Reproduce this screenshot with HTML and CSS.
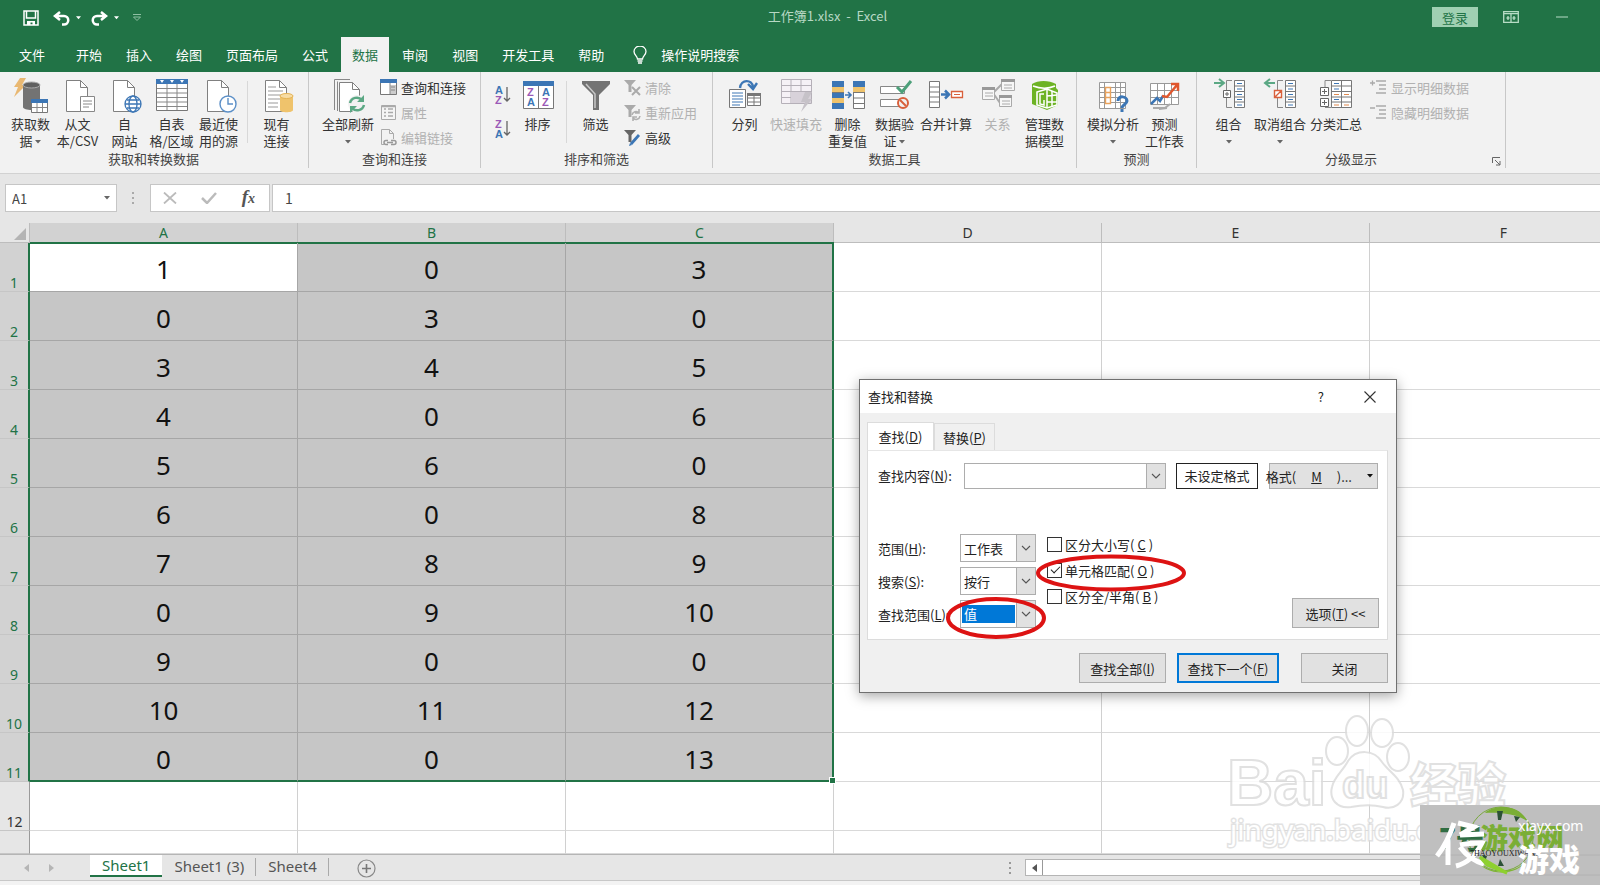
FILE: index.html
```html
<!DOCTYPE html>
<html lang="zh-CN">
<head>
<meta charset="utf-8">
<title>工作簿1.xlsx - Excel</title>
<link rel="stylesheet" href="styles.css">
</head>
<body>
<svg class="defs" aria-hidden="true">
  <defs>
    <symbol id="caret" viewBox="0 0 6 4"><path d="M0 0h6L3 3.5z" fill="currentColor"/></symbol>
    <symbol id="chev" viewBox="0 0 10 6"><path d="M1 1l4 4 4-4" fill="none" stroke="#555" stroke-width="1.1"/></symbol>
    <symbol id="page" viewBox="0 0 22 32"><path d="M.5.5h14l7 7v24H.5z" fill="#fff" stroke="#808080"/><path d="M14.500.5v7h7" fill="none" stroke="#808080"/></symbol>
    <symbol id="funnel" viewBox="0 0 28 30"><path d="M0 0h28v3L17 14v15h-6V14L0 3z" fill="#737373"/><path d="M4 3l9 10v14" fill="none" stroke="#c8c8c8" stroke-width="1.500"/></symbol>
  </defs>
</svg>
<div class="app">
  <header class="titlebar">
    <div class="quick">
      <button aria-label="保存"><svg width="16" height="16" viewBox="0 0 16 16"><path d="M1 1h14v14H1zM3.500 1v7h9V1" fill="none" stroke="#fff" stroke-width="1.500"/><path d="M4 11h8v4H9.500v-2.500h-2V15H4z" fill="#fff"/></svg></button>
      <button class="undo" aria-label="撤消"><svg width="17" height="15" viewBox="0 0 17 15"><path d="M7 1L2 5l5 4M2.500 5H11a4 4 0 0 1 0 8.500H9" fill="none" stroke="#fff" stroke-width="2.500"/></svg><svg class="tiny"><use href="#caret"/></svg></button>
      <button class="redo" aria-label="恢复"><svg width="17" height="15" viewBox="0 0 17 15"><path d="M10 1l5 4-5 4M14.500 5H6a4 4 0 0 0 0 8.500h2" fill="none" stroke="#fff" stroke-width="2.500"/></svg><svg class="tiny"><use href="#caret"/></svg></button>
      <button class="custom" aria-label="自定义快速访问工具栏"><svg width="10" height="8" viewBox="0 0 10 8"><path d="M1 .5h8M1.500 3h7L5 6.500z" fill="none" stroke="#8fc0a3"/></svg></button>
    </div>
    <h1>工作簿1.xlsx&nbsp; -&nbsp; Excel</h1>
    <div class="winctl">
      <button class="login">登录</button>
      <button aria-label="功能区显示选项"><svg width="16" height="12" viewBox="0 0 16 12"><path d="M.7.7h14.600v10.600H.7zM.7 2.700h14.600" fill="none" stroke="#b7dcc5" stroke-width="1.300"/><path d="M8 3v8M5 5v4M3.500 7h3M11 5v4M9.500 7h3" stroke="#b7dcc5" stroke-width="1.300"/></svg></button>
      <button aria-label="最小化"><svg width="12" height="2"><path d="M0 1h12" stroke="#b7dcc5"/></svg></button>
    </div>
  </header>
  <nav class="tabs">
    <button class="file">文件</button><button>开始</button><button>插入</button><button>绘图</button><button>页面布局</button><button>公式</button><button class="on">数据</button><button>审阅</button><button>视图</button><button>开发工具</button><button>帮助</button>
    <button class="tell"><svg width="14" height="18" viewBox="0 0 14 18"><path d="M4.500 13c0-3-3.500-4-3.500-7.500a6 5.500 0 0 1 12 0C13 9 9.500 10 9.500 13zM4.500 15h5M5 17h4" fill="none" stroke="#fff" stroke-width="1.300"/></svg>操作说明搜索</button>
  </nav>

  <section class="ribbon">
    <div class="group">
      <div class="tools">
        <button class="big"><svg width="36" height="36" viewBox="0 0 36 36"><path d="M7 0h6L9 7h4L1 19l4-10H1z" fill="#e9b872"/><path d="M10 7v22c0 4 17 4 17 0V7z" fill="#737373"/><ellipse cx="18.500" cy="7" rx="8.500" ry="3" fill="#606060" stroke="#aaa"/><path d="M18.500 21.500h16v13h-16z" fill="#fff" stroke="#777"/><path d="M18 21h17v4H18z" fill="#3c76b5"/><path d="M24 25v9M29.500 25v9M19 29.500h15" stroke="#888"/></svg><span>获取数<br>据 <svg class="car"><use href="#caret"/></svg></span></button>
        <button class="big"><svg width="36" height="36" viewBox="0 0 36 36"><use href="#page" x="6" y="2" width="22" height="32"/><path d="M20.500 18.500h14v15h-14z" fill="#fff" stroke="#888"/><path d="M23 23h9M23 26h9M23 29h6" stroke="#888"/></svg><span>从文<br>本/CSV</span></button>
        <button class="big"><svg width="36" height="36" viewBox="0 0 36 36"><use href="#page" x="6" y="2" width="22" height="32"/><g fill="#fff" stroke="#3c76b5" stroke-width="1.300"><circle cx="26" cy="26" r="8"/><ellipse cx="26" cy="26" rx="4" ry="8"/><path d="M18 26h16M20 22h12M20 30h12" fill="none"/></g></svg><span>自<br>网站</span></button>
        <button class="big"><svg width="36" height="36" viewBox="0 0 36 36"><path d="M2.500 1.500h31v31h-31z" fill="#fff" stroke="#777"/><path d="M2 1h32v5H2z" fill="#3c76b5"/><path d="M6 2h4l-2 3zM16 2h4l-2 3zM26 2h4l-2 3z" fill="#fff"/><path d="M13 6v26M23 6v26M3 10.500h30M3 15h30M3 19.500h30M3 24h30M3 28.500h30" stroke="#888"/></svg><span>自表<br>格/区域</span></button>
        <button class="big"><svg width="36" height="36" viewBox="0 0 36 36"><use href="#page" x="6" y="2" width="22" height="32"/><circle cx="27" cy="26" r="8" fill="#fff" stroke="#5b8fc7" stroke-width="1.400"/><path d="M27 20v6h5" fill="none" stroke="#5b8fc7" stroke-width="1.400"/></svg><span>最近使<br>用的源</span></button>
        <i class="rule"></i>
        <button class="big"><svg width="36" height="36" viewBox="0 0 36 36"><use href="#page" x="6" y="2" width="22" height="32"/><path d="M9 9h8M9 13h15M9 17h15M9 21h12M9 25h10M9 29h10" stroke="#999"/><path d="M21 18v14c0 3 13 3 13 0V18z" fill="#efc36c"/><ellipse cx="27.500" cy="18" rx="6.500" ry="2.500" fill="#f7dca4" stroke="#e5b354"/></svg><span>现有<br>连接</span></button>
      </div>
      <h2>获取和转换数据</h2>
    </div>

    <div class="group">
      <div class="tools">
        <button class="big wide"><svg width="36" height="36" viewBox="0 0 36 36"><path d="M4.500 32V1.500H20M7.500 33V3.500" fill="none" stroke="#888"/><path d="M9.500 4.500h13l7 7v22h-20z" fill="#fff" stroke="#808080"/><path d="M22.500 4.500v7h7" fill="none" stroke="#808080"/><circle cx="27" cy="26" r="9" fill="#f2f2f2"/><path d="M20 25a7 7 0 0 1 12-3M34 27a7 7 0 0 1-12 3" fill="none" stroke="#5ba884" stroke-width="2.500"/><path d="M34 17v7h-7zM20 35v-7h7z" fill="#5ba884"/></svg><span>全部刷新<br><svg class="car"><use href="#caret"/></svg></span></button>
        <div class="smalls">
          <button><svg width="17" height="17" viewBox="0 0 17 17"><path d="M.5.5h16v15H.5z" fill="#fff" stroke="#777"/><path d="M0 0h17v4H0z" fill="#3c76b5"/><path d="M10 6h6v9h-6z" fill="#ccc"/><path d="M10 4v11M11 8h4M11 11h4" stroke="#888"/></svg>查询和连接</button>
          <button disabled><svg width="17" height="17" viewBox="0 0 17 17"><path d="M1.500 1.500h14v14h-14z" fill="#f5f5f5" stroke="#aaa"/><path d="M4 5h2M8 5h5M4 8.500h2M8 8.500h5M4 12h2M8 12h5M2 2.500h13" stroke="#aaa" stroke-width="1.500"/></svg>属性</button>
          <button disabled><svg width="17" height="17" viewBox="0 0 17 17"><path d="M4 15.500H1.500V.5h8l4 4V10M9.500.5v4h4" fill="none" stroke="#aaa"/><path d="M8 11.500H6a2 2 0 0 0 0 4h2M11 11.500h3a2 2 0 0 1 0 4h-3M7 13.500h6" fill="none" stroke="#999" stroke-width="1.500"/></svg>编辑链接</button>
        </div>
      </div>
      <h2>查询和连接</h2>
    </div>

    <div class="group sortgroup">
      <div class="tools">
        <div class="azcol">
          <button aria-label="升序"><svg width="16" height="20" viewBox="0 0 16 20"><text x="0" y="9" class="az a">A</text><text x="0" y="19" class="az z">Z</text><path d="M12 2v14M9 13l3 3 3-3" fill="none" stroke="#666" stroke-width="1.300"/></svg></button>
          <button aria-label="降序"><svg width="16" height="20" viewBox="0 0 16 20"><text x="0" y="9" class="az z">Z</text><text x="0" y="19" class="az a">A</text><path d="M12 2v14M9 13l3 3 3-3" fill="none" stroke="#666" stroke-width="1.300"/></svg></button>
        </div>
        <button class="big"><svg width="36" height="36" viewBox="0 0 36 36"><path d="M3.500 3.500h30v27h-30z" fill="#fff" stroke="#777"/><path d="M3 3h31v5H3z" fill="#3c76b5"/><path d="M18.500 8v22" stroke="#777"/><text x="7" y="18" class="az z">Z</text><text x="7" y="28" class="az a">A</text><text x="22" y="18" class="az a">A</text><text x="22" y="28" class="az z">Z</text></svg><span>排序</span></button>
        <i class="rule"></i>
        <button class="big"><svg width="36" height="36" viewBox="0 0 36 36"><use href="#funnel" x="4" y="3" width="28" height="30"/></svg><span>筛选</span></button>
        <div class="smalls">
          <button disabled><svg width="17" height="17" viewBox="0 0 17 17"><path d="M0 1h12L7.500 6v7h-3V6z" fill="#aaa"/><path d="M8 8l8 8M16 8l-8 8" stroke="#aaa" stroke-width="2"/></svg>清除</button>
          <button disabled><svg width="17" height="17" viewBox="0 0 17 17"><path d="M0 1h12L7.500 6v7h-3V6z" fill="#aaa"/><path d="M8 11a4 4 0 0 1 7-2M16 12a4 4 0 0 1-7 2M15 5v4h-4M9 17v-4h4" fill="none" stroke="#b0b0b0" stroke-width="1.600"/></svg>重新应用</button>
          <button><svg width="17" height="17" viewBox="0 0 17 17"><path d="M0 1h12L7.500 6v7h-3V6z" fill="#666"/><path d="M7 15l8-9" stroke="#3c76b5" stroke-width="2.800"/><path d="M5 17l1-3 2 2z" fill="#3c76b5"/></svg>高级</button>
        </div>
      </div>
      <h2>排序和筛选</h2>
    </div>

    <div class="group">
      <div class="tools">
        <button class="big"><svg width="36" height="36" viewBox="0 0 36 36"><path d="M13 10c1-9 12-9 13-1M21 6l5 5 4-6" fill="none" stroke="#3c76b5" stroke-width="2.400"/><path d="M2.500 11.500h16v18h-16z" fill="#fff" stroke="#777"/><path d="M5 15h11M5 18h11M5 21h11M5 24h11M5 27h8" stroke="#3c76b5"/><path d="M20.500 15.500h13v12h-13zM27 16v12M21 20h12M21 24h12" fill="#fff" stroke="#777"/><path d="M20 15h14v3H20z" fill="#777"/></svg><span>分列</span></button>
        <button class="big four" disabled><svg width="36" height="36" viewBox="0 0 36 36"><path d="M3.500 1.500h30v24h-30z" fill="#f5f1f6" stroke="#b5b0b8"/><path d="M3 7.500h31M3 13.500h31M3 19.500h31M13 2v23M23 2v23" stroke="#b5b0b8"/><path d="M13 14h20v11H13z" fill="#d8d2da"/><path d="M27 14h7l-4 7h4L23 34l4-10h-4z" fill="#c6c2c8"/></svg><span>快速填充</span></button>
        <button class="big"><svg width="36" height="36" viewBox="0 0 36 36"><path d="M2 3h12v28H2z" fill="#3c76b5"/><path d="M2 9h12v5H2zM2 20h12v5H2z" fill="#efc36c"/><path d="M23.500 3.500h11v27h-11z" fill="#fff" stroke="#777"/><path d="M23 3h12v6H23z" fill="#3c76b5"/><path d="M23 9h12v5H23z" fill="#efc36c"/><path d="M23 14.500h12M23 20h12M23 25.500h12M2 14.500h12" stroke="#777"/><path d="M15 17h5M18 14l3 3-3 3" fill="none" stroke="#3c76b5" stroke-width="1.600"/></svg><span>删除<br>重复值</span></button>
        <button class="big"><svg width="36" height="36" viewBox="0 0 36 36"><path d="M3.500 8.500h24v7h-24zM3.500 21.500h24v7h-24z" fill="#fff" stroke="#888"/><path d="M20 9l5 5 9-11" fill="none" stroke="#4da07a" stroke-width="3"/><circle cx="26" cy="25" r="5" fill="#f2f2f2" stroke="#d9603c" stroke-width="2"/><path d="M23 22l6 6" stroke="#d9603c" stroke-width="2"/></svg><span>数据验<br>证 <svg class="car"><use href="#caret"/></svg></span></button>
        <button class="big four"><svg width="36" height="36" viewBox="0 0 36 36"><path d="M1.500 3.500h10v26h-10zM1 9h11M1 14h11M1 19h11M1 24h11" fill="#fff" stroke="#777"/><path d="M13 16.500h7M17 12.500l4 4-4 4" fill="none" stroke="#3c76b5" stroke-width="2.500"/><path d="M23.500 13.500h11v6h-11z" fill="#fff" stroke="#d9603c" stroke-width="1.300"/><path d="M26 16.500h6" stroke="#d9603c"/></svg><span>合并计算</span></button>
        <button class="big" disabled><svg width="36" height="36" viewBox="0 0 36 36"><path d="M13 15l9-9M13 15l7 10" stroke="#aaa" stroke-width="2"/><g fill="#f7f7f7" stroke="#aaa"><path d="M2.500 9.500h12v12h-12zM21.500 1.500h13v11h-13zM19.500 17.500h12v11h-12z"/><path d="M5 15h8M5 18h8M24 7h8M24 10h8M22 23h8M22 26h8"/></g><path d="M2 9h13v3H2zM21 1h14v3H21zM19 17h13v3H19z" fill="#999"/></svg><span>关系</span></button>
        <button class="big"><svg width="36" height="36" viewBox="0 0 36 36"><path d="M5 6c6-4 17-4 24 0v4l2 2v15L20 32 5 26z" fill="#6db324"/><path d="M6 8c8 3 15 3 22 0M10 14l10-3 10 4v12l-10 3-10-3z" fill="none" stroke="#fff" stroke-width="1.600"/><path d="M17 16h-4v10l4 1v-5M20 11v19M25 13v16M20 18l10-1M20 24h10" fill="none" stroke="#fff" stroke-width="1.500"/></svg><span>管理数<br>据模型</span></button>
      </div>
      <h2>数据工具</h2>
    </div>

    <div class="group">
      <div class="tools">
        <button class="big four"><svg width="36" height="36" viewBox="0 0 36 36"><path d="M4.500 4.500h26v26h-26zM4 9.500h27M4 14.500h27M4 19.500h27M4 24.500h27M9.500 4v27M20.500 4v27M25.500 4v27" fill="#fff" stroke="#999"/><path d="M10.500 9.500h5v16h-5zM10.500 14.500h5M10.500 19.500h5" fill="#fff" stroke="#e9a25b" stroke-width="1.400"/><path d="M23 23c0-6 9-5 9 0 0 3-5 4-5 7" fill="none" stroke="#3c76b5" stroke-width="3"/><path d="M25.500 31h3v3h-3z" fill="#3c76b5"/></svg><span>模拟分析<br><svg class="car"><use href="#caret"/></svg></span></button>
        <button class="big"><svg width="36" height="36" viewBox="0 0 36 36"><path d="M3.500 5.500h28v21h-28zM3 12.500h28M3 19.500h28M10.500 5v21M17.500 5v21M24.500 5v21" fill="#fff" stroke="#999"/><path d="M6 30h12l5-4M12 31l8-1" fill="none" stroke="#aaa" stroke-width="2"/><path d="M4 26l6-6 3 3 3-5" fill="none" stroke="#3c76b5" stroke-width="2.500"/><path d="M15 18l5 1 10-12M24 6h7v7" fill="none" stroke="#e0572e" stroke-width="2.500"/></svg><span>预测<br>工作表</span></button>
      </div>
      <h2>预测</h2>
    </div>

    <div class="group">
      <div class="tools">
        <button class="big"><svg width="36" height="36" viewBox="0 0 36 36"><path d="M3 5h9M8 1l5 4-5 4" fill="none" stroke="#5ba884" stroke-width="2"/><path d="M21 2.500h-5.500v10M15.500 19v10.500H21" fill="none" stroke="#888"/><path d="M12.500 12.500h7v7h-7zM14 16h4M16 14v4" fill="#fff" stroke="#666"/><path d="M23.500 2.500h10v27h-10zM23 8h11M23 13.500h11M23 19h11M23 24h11" fill="#fff" stroke="#777"/><path d="M26 5.500h5M26 11h5M26 16.500h5M26 21.500h5M26 27h5" stroke="#3c76b5"/></svg><span>组合<br><svg class="car"><use href="#caret"/></svg></span></button>
        <button class="big four"><svg width="36" height="36" viewBox="0 0 36 36"><path d="M13 5H4M8 1L3 5l5 4" fill="none" stroke="#5ba884" stroke-width="2"/><path d="M21 2.500h-5.500v10M15.500 19v10.500H21" fill="none" stroke="#888"/><path d="M12.500 12.500h7v7h-7zM13 19l6-6" fill="#fff" stroke="#d9603c" stroke-width="1.400"/><path d="M23.500 2.500h10v27h-10zM23 8h11M23 13.500h11M23 19h11M23 24h11" fill="#fff" stroke="#777"/><path d="M26 5.500h5M26 11h5M26 16.500h5M26 21.500h5M26 27h5" stroke="#3c76b5"/></svg><span>取消组合<br><svg class="car"><use href="#caret"/></svg></span></button>
        <button class="big four"><svg width="36" height="36" viewBox="0 0 36 36"><path d="M7 9V2.500h6M7 29.500h6" fill="none" stroke="#888"/><path d="M13.500 2.500h20v27h-20zM13 8h21M13 13.500h21M13 19h21M13 24h21M23.500 2v28" fill="#fff" stroke="#777"/><path d="M16 5.500h5M16 11h5M16 21.500h5" stroke="#3c76b5"/><path d="M16 16.500h5M26 16.500h5M16 27h5M26 27h5" stroke="#e08a4f"/><path d="M2.500 9.500h8v8h-8zM4 13.500h5M6.500 11v5M2.500 20.500h8v8h-8zM4 24.500h5M6.500 22v5" fill="#fff" stroke="#666"/></svg><span>分类汇总</span></button>
        <div class="smalls">
          <button disabled><svg width="17" height="17" viewBox="0 0 17 17"><path d="M0 4h5M2.500 1.500v5M6 2h10M9 6h7M9 10h7M6 14h10" stroke="#aaa" stroke-width="1.300"/></svg>显示明细数据</button>
          <button disabled><svg width="17" height="17" viewBox="0 0 17 17"><path d="M0 4h5M6 2h10M9 6h7M9 10h7M6 14h10" stroke="#aaa" stroke-width="1.300"/></svg>隐藏明细数据</button>
        </div>
      </div>
      <h2>分级显示</h2>
      <button class="launch" aria-label="分级显示设置"><svg width="9" height="9" viewBox="0 0 9 9"><path d="M.5 6V.5H8M3 3l5 5M8 4v4H4" fill="none" stroke="#666"/></svg></button>
    </div>
  </section>

  <div class="formula">
    <label class="namebox"><input value="A1" aria-label="名称框"><svg class="car"><use href="#caret"/></svg></label>
    <svg class="grip" width="4" height="14"><path d="M1 1h2v2H1zM1 6h2v2H1zM1 11h2v2H1z" fill="#aaa"/></svg>
    <div class="fx">
      <button aria-label="取消"><svg width="14" height="12" viewBox="0 0 14 12"><path d="M1 .5l12 11M13 .5L1 11.500" stroke="#bbb" stroke-width="1.800"/></svg></button>
      <button aria-label="输入"><svg width="16" height="12" viewBox="0 0 16 12"><path d="M1 6l5 5 9-10" fill="none" stroke="#bbb" stroke-width="2.500"/></svg></button>
      <button class="fn" aria-label="插入函数">f<small>x</small></button>
    </div>
    <input class="value" value="1" aria-label="编辑栏">
  </div>

  <main class="sheet">
    <table>
      <thead><tr><th class="corner"><svg width="12" height="12"><path d="M12 0v12H0z" fill="#b4b4b4"/></svg></th><th class="hot">A</th><th class="hot">B</th><th class="hot">C</th><th>D</th><th>E</th><th>F</th></tr></thead>
      <tbody>
        <tr class="sel"><th>1</th><td class="active">1</td><td>0</td><td>3</td><td></td><td></td><td></td></tr>
        <tr class="sel"><th>2</th><td>0</td><td>3</td><td>0</td><td></td><td></td><td></td></tr>
        <tr class="sel"><th>3</th><td>3</td><td>4</td><td>5</td><td></td><td></td><td></td></tr>
        <tr class="sel"><th>4</th><td>4</td><td>0</td><td>6</td><td></td><td></td><td></td></tr>
        <tr class="sel"><th>5</th><td>5</td><td>6</td><td>0</td><td></td><td></td><td></td></tr>
        <tr class="sel"><th>6</th><td>6</td><td>0</td><td>8</td><td></td><td></td><td></td></tr>
        <tr class="sel"><th>7</th><td>7</td><td>8</td><td>9</td><td></td><td></td><td></td></tr>
        <tr class="sel"><th>8</th><td>0</td><td>9</td><td>10</td><td></td><td></td><td></td></tr>
        <tr class="sel"><th>9</th><td>9</td><td>0</td><td>0</td><td></td><td></td><td></td></tr>
        <tr class="sel"><th>10</th><td>10</td><td>11</td><td>12</td><td></td><td></td><td></td></tr>
        <tr class="sel last"><th>11</th><td>0</td><td>0</td><td>13</td><td></td><td></td><td></td></tr>
        <tr><th>12</th><td></td><td></td><td></td><td></td><td></td><td></td></tr>
        <tr><th></th><td></td><td></td><td></td><td></td><td></td><td></td></tr>
      </tbody>
    </table>
  </main>

  <footer class="bottom">
    <div class="arrows"><svg width="30" height="9"><path d="M5 0v8L0 4zM25 0v8l5-4z" fill="#b5b5b5"/></svg></div>
    <button class="st on">Sheet1</button><button class="st">Sheet1 (3)</button><button class="st">Sheet4</button>
    <button class="add" aria-label="新工作表"><svg width="19" height="19" viewBox="0 0 19 19"><circle cx="9.500" cy="9.500" r="8.500" fill="none" stroke="#888" stroke-width="1.200"/><path d="M9.500 5v9M5 9.500h9" stroke="#777" stroke-width="1.600"/></svg></button>
    <svg class="grip" width="4" height="14"><path d="M1 1h2v2H1zM1 6h2v2H1zM1 11h2v2H1z" fill="#999"/></svg>
    <div class="scroll"><button aria-label="向左滚动"><svg width="5" height="8"><path d="M5 0v8L0 4z" fill="#555"/></svg></button></div>
  </footer>
  <div class="status"></div>

  <section class="dialog" role="dialog" aria-labelledby="dlg">
    <div class="dtitle"><h2 id="dlg">查找和替换</h2><button aria-label="帮助">?</button><button aria-label="关闭"><svg width="12" height="12" viewBox="0 0 12 12"><path d="M.5.5l11 11M11.500.5l-11 11" stroke="#333" stroke-width="1.100"/></svg></button></div>
    <div class="dbody">
      <div class="dtabs"><button class="on">查找(<u>D</u>)</button><button>替换(<u>P</u>)</button></div>
      <div class="panel">
        <div class="find">
          <label for="what">查找内容(<u>N</u>):</label>
          <div class="combo text"><input id="what"><span><svg width="10" height="6"><use href="#chev"/></svg></span></div>
          <output>未设定格式</output>
          <button class="btn fmt">格式(<u>M</u>)...<svg class="car"><use href="#caret"/></svg></button>
        </div>
        <div class="opts">
          <div class="selects">
            <label for="s1">范围(<u>H</u>):</label><div class="combo"><select id="s1"><option>工作表</option><option>工作簿</option></select><span><svg width="10" height="6"><use href="#chev"/></svg></span></div>
            <label for="s2">搜索(<u>S</u>):</label><div class="combo"><select id="s2"><option>按行</option><option>按列</option></select><span><svg width="10" height="6"><use href="#chev"/></svg></span></div>
            <label for="s3">查找范围(<u>L</u>):</label><div class="combo picked"><select id="s3"><option>值</option><option>公式</option></select><span><svg width="10" height="6"><use href="#chev"/></svg></span></div>
          </div>
          <div class="checks">
            <label><input type="checkbox">区分大小写(<u>C</u>)</label>
            <label><input type="checkbox" checked>单元格匹配(<u>O</u>)</label>
            <label><input type="checkbox">区分全/半角(<u>B</u>)</label>
          </div>
          <button class="btn more">选项(<u>T</u>) &lt;&lt;</button>
        </div>
      </div>
      <div class="actions"><button class="btn all">查找全部(<u>I</u>)</button><button class="btn next">查找下一个(<u>F</u>)</button><button class="btn close">关闭</button></div>
    </div>
    <svg class="marks" viewBox="0 0 536 314" aria-hidden="true"><g fill="none" stroke="#dd1313" stroke-width="4"><ellipse cx="251" cy="193" rx="73" ry="16.500"/><ellipse cx="136" cy="238" rx="48" ry="19"/></g></svg>
  </section>

  <div class="baidu" aria-hidden="true">
    <svg width="300" height="160" viewBox="0 0 300 160">
      <g fill="#fff" stroke="#dcdcdc" stroke-width="2">
        <ellipse cx="46" cy="0" rx="0" ry="0"/>
        <ellipse cx="117" cy="38" rx="11" ry="14"/><ellipse cx="137" cy="18" rx="11" ry="15"/><ellipse cx="162" cy="20" rx="11" ry="14"/><ellipse cx="178" cy="44" rx="11" ry="14"/>
        <path d="M128 48c8-12 26-12 34 1 6 9 18 15 21 28 2 14-10 20-20 17-12-3-22-2-32 0-14 2-22-8-19-20 2-10 11-16 16-26z"/>
        <text x="7" y="92" class="bai">Bai</text><text x="122" y="85" class="du">du</text><text x="190" y="90" class="jy">经验</text>
      </g>
      <text x="10" y="127" class="url">jingyan.baidu.com</text>
    </svg>
  </div>
  <div class="badge" aria-hidden="true">
    <svg width="180" height="80" viewBox="0 0 180 80">
      <path d="M0 50h180M0 70h180" stroke="#b2b2b2"/>
      <circle cx="81" cy="34" r="32" fill="none" stroke="#79a83e"/>
      <path d="M65 8c8-8 34-10 42 8-10-7-28-9-42-8z" fill="#7aae35"/>
      <path d="M54 52c8 14 26 14 32 16l-8-4c14 4 22-2 28-8-8 14-40 18-52-4z" fill="#7fb535"/>
      <path d="M77 6l6 0-2 9h-3zM94 11l6 1-4 5zM80 54l4 7h-6zM62 50l5 1-2 6z" fill="#2c5136"/>
      <text x="19" y="44" class="n7">7号</text><text x="60" y="44" class="yxw">游戏网</text>
      <path d="M34 18c-4 12-8 22-17 33M28 32v28M38 18l16 4-14 8M40 30l24-1M40 40c8-2 16-2 22-2-6 12-14 20-26 23M40 42c6 8 14 14 24 17" fill="none" stroke="#fff" stroke-width="5"/>
      <path d="M60 52l27 16-20-8z" fill="#8ed02f" stroke="#8ed02f" stroke-width="3"/>
      <text x="50" y="51" class="py">7HAOYOUXIWANG</text>
      <text x="98" y="26" class="xia">xiayx.com</text><text x="98" y="66" class="yx">游戏</text>
    </svg>
  </div>
</div>
</body>
</html>
```
FILE: styles.css
```css
* { box-sizing: border-box; }
body { margin: 0; font: 13px/17px "Noto Sans", "Noto Sans CJK SC", sans-serif; color: #333; }
button, input, select { font: inherit; color: inherit; margin: 0; padding: 0; border: 0; background: none; }
button { white-space: nowrap; }
h1, h2 { margin: 0; font-size: 13px; font-weight: 400; }
svg { display: block; flex: none; }
.defs { position: absolute; width: 0; height: 0; }
.car { width: 6px; height: 4px; display: inline-block; vertical-align: middle; color: #666; }
.tiny { width: 5px; height: 4px; }

.app { position: relative; height: 100vh; display: flex; flex-direction: column; overflow: hidden; font-family: "Noto Sans CJK SC", sans-serif; background: #e6e6e6; }

.titlebar { height: 37px; flex: none; display: grid; grid-template-columns: 1fr auto 1fr; align-items: start; background: #217346; color: #fff; padding-right: 32px; }
.titlebar h1 { color: #b7d8c4; padding: 7px 0 0 87px; }
.quick { display: flex; align-items: center; padding: 8px 0 0 23px; height: 28px; }
.quick button { display: flex; align-items: center; gap: 6px; }
.undo { padding-left: 14px !important; }
.redo { padding-left: 10px !important; }
.custom { padding-left: 13px !important; }
.winctl { display: flex; justify-content: flex-end; align-items: center; height: 34px; gap: 37px; }
.winctl .login { width: 46px; height: 20px; background: #9fd0b2; color: #217346; margin-right: -12px; }

.tabs { height: 35px; flex: none; display: flex; background: #217346; color: #fff; }
.tabs button { padding: 0 11px; margin: 0 1px; }
.tabs .file { padding: 0 19px; margin: 0; }
.tabs .on { background: #f2f2f2; color: #217346; }
.tabs .tell { display: flex; align-items: center; gap: 14px; padding-left: 16px; }

.ribbon { flex: none; height: 102px; display: flex; background: #f2f2f2; border-bottom: 1px solid #d2d2d2; }
.group { position: relative; display: flex; flex-direction: column; padding: 2px 8px 0; margin-bottom: 5px; border-image: linear-gradient(#c8c8c8, #c8c8c8) 1; border-right: 1px solid #c8c8c8; }
.group:first-child { padding-left: 7px; }
.group h2 { text-align: center; line-height: 18px; color: #444; }
.tools { display: flex; flex: 1; }
.big { width: 47px; display: flex; flex-direction: column; align-items: center; justify-content: flex-start; padding-top: 4px; }
.big.four { width: 56px; }
.big.wide { width: 62px; }
.big span { line-height: 17px; padding-top: 1px; }
.big .car { vertical-align: 2px; }
button:disabled { color: #b1b1b1; }
.rule { width: 1px; height: 62px; background: #d8d8d8; margin: 7px 5px 0; }
.smalls { display: flex; flex-direction: column; padding: 1px 6px 0 1px; }
.smalls button { display: flex; align-items: center; gap: 4px; height: 25px; }
.group:last-child .smalls { padding: 1px 28px 0 6px; }
.azcol { display: flex; flex-direction: column; gap: 14px; padding: 11px 3px 0 6px; }
.sortgroup .smalls { padding: 1px 7px 0 5px; }
.az { font: bold 11px "Liberation Sans", sans-serif; }
.az.a { fill: #3c76b5; }
.az.z { fill: #9b59b6; }
.launch { position: absolute; right: 4px; bottom: 2px; }

.formula { flex: none; height: 49px; padding: 10px 0 11px 5px; display: flex; align-items: stretch; color: #444; }
.namebox, .fx, .value { background: #fff; border: 1px solid #c6c6c6; }
.namebox { width: 112px; display: flex; align-items: center; padding: 0 6px; }
.namebox input { flex: 1; min-width: 0; }
.formula .grip { align-self: center; margin: 0 15px 0 14px; }
.fx { width: 120px; display: flex; align-items: center; justify-content: space-between; padding: 0 14px 0 12px; margin-right: 2px; }
.fn { font: italic bold 19px/22px "Liberation Serif", serif; color: #555; }
.fn small { font-size: 14px; }
.value { flex: 1; padding-left: 12px; border-right: 0; font-size: 14px; }

.sheet { flex: 1; min-height: 0; display: flex; overflow: hidden; background: #fff; border-bottom: 1px solid #b5b5b5; }
.sheet table { flex: 1; display: flex; flex-direction: column; overflow: hidden; font-family: "Noto Sans", sans-serif; }
.sheet tr { display: grid; grid-template-columns: 30px repeat(6, 268px); }
.sheet thead tr { height: 20px; background: #e6e6e6; border-bottom: 1px solid #bdbdbd; }
.sheet th { font-weight: 400; padding: 0; font-size: 14px; }
.sheet thead th { border-right: 1px solid #bdbdbd; line-height: 20px; }
.sheet thead .hot { background: #d2d2d2; color: #217346; }
.corner { display: flex; justify-content: flex-end; align-items: flex-end; padding: 0 3px 3px 0 !important; }
.sheet tbody { flex: 1; min-height: 0; display: grid; grid-template-rows: repeat(12, minmax(0, 13fr)) minmax(0, 6fr); }
.sheet td { display: flex; align-items: center; justify-content: center; padding: 4px 0 0; font-size: 26px; line-height: 32px; color: #111; border-right: 1px solid #d0d0d0; border-bottom: 1px solid #d9d9d9; }
.sheet tbody th { display: flex; align-items: flex-end; justify-content: center; background: #e6e6e6; border-right: 1px solid #9a9a9a; border-bottom: 1px solid #c6c6c6; line-height: 16px; }
.sel th { background: #d2d2d2 !important; color: #217346; border-right: 2px solid #217346 !important; }
.sel td:nth-child(-n+4) { background: #c6c6c6; border-color: #a6a6a6; }
.sel td.active { background: #fff; }
.sel td:nth-child(4) { border-right: 2px solid #217346; }
.sel:first-child td:nth-child(-n+4) { box-shadow: 0 -1px 0 #217346, inset 0 1px 0 #217346; }
.last td:nth-child(-n+4) { border-bottom: 2px solid #217346; }
.last td:nth-child(4) { position: relative; }
.last td:nth-child(4)::after { content: ""; position: absolute; right: -3px; bottom: -3px; width: 5px; height: 5px; background: #217346; outline: 1px solid #fff; }

.bottom { flex: none; height: 26px; display: flex; align-items: flex-start; border-bottom: 1px solid #c8c8c8; font: 15px/22px "Noto Sans", sans-serif; color: #555; }
.arrows { width: 90px; padding: 9px 0 0 24px; }
.st { padding: 0 12px; height: 22px; line-height: 18px; position: relative; }
.st:not(.on)::after { content: ""; position: absolute; right: 0; top: 3px; width: 1px; height: 18px; background: #aaa; }
.st.on { background: #fff; color: #217346; border-bottom: 2px solid #217346; }
.add { margin: 4px auto 0 28px; }
.bottom .grip { margin: 6px 13px 0 0; }
.scroll { width: 575px; height: 17px; margin-top: 4px; background: #fff; border: 1px solid #b5b5b5; border-right: 0; }
.scroll button { width: 17px; height: 15px; display: flex; align-items: center; justify-content: center; border-right: 1px solid #999; }
.status { height: 4px; flex: none; background: #f3f3f3; }

.dialog { position: absolute; left: 859px; top: 379px; width: 538px; background: #f0f0f0; border: 1px solid #707070; box-shadow: 0 3px 12px rgba(0, 0, 0, .35); color: #222; }
.dtitle { height: 33px; display: flex; align-items: center; background: #fff; padding: 0 20px 0 8px; }
.dtitle h2 { flex: 1; }
.dtitle button { margin-left: 40px; }
.dbody { padding: 9px 8px 9px 7px; }
.dtabs { display: flex; align-items: flex-end; height: 28px; }
.dtabs button { width: 61px; height: 27px; border: 1px solid #dcdcdc; border-bottom: 0; }
.dtabs .on { width: 67px; height: 28px; background: #fff; }
.panel { background: #fff; border: 1px solid #dcdcdc; border-top-color: #e6e6e6; padding: 12px 8px 11px 10px; height: 190px; display: flex; flex-direction: column; justify-content: space-between; }
.find { display: flex; align-items: stretch; height: 26px; }
.find label { width: 86px; line-height: 26px; }
.combo { display: flex; width: 76px; height: 28px; border: 1px solid #adadad; background: #fff; padding-left: 3px; }
.combo.text { width: 202px; height: 26px; margin-right: 10px; }
.combo input, .combo select { flex: 1; min-width: 0; appearance: none; outline: 0; }
.combo span { width: 19px; display: flex; align-items: center; justify-content: center; background: #e1e1e1; border-left: 1px solid #adadad; }
.combo.picked { padding: 0 0 0 1px; }
.combo.picked select { background: #0078d7; color: #fff; padding-left: 2px; margin: 4px 1px 4px 0; line-height: 18px; }
.find output { width: 82px; border: 1px solid #222; text-align: center; line-height: 24px; margin-right: 11px; }
.btn { background: #e1e1e1; border: 1px solid #adadad; height: 30px; }
.fmt { width: 109px; height: 26px; display: flex; align-items: center; justify-content: flex-end; gap: 15px; padding-right: 4px; }
.fmt .car { color: #111; }
.opts { display: flex; align-items: flex-end; }
.selects { display: grid; grid-template-columns: 82px 76px; row-gap: 5px; align-items: center; }
.checks { align-self: flex-start; display: flex; flex-direction: column; gap: 9px; padding: 2px 0 0 11px; }
.checks label { display: flex; align-items: center; gap: 3px; }
.checks input { appearance: none; width: 15px; height: 15px; border: 1px solid #333; background: #fff; position: relative; }
.checks input:checked::after { content: ""; position: absolute; left: 3px; top: 2px; width: 8px; height: 4px; border: solid #222; border-width: 0 0 1px 1px; rotate: -45deg; }
.more { width: 87px; margin-left: auto; }
.actions { display: flex; justify-content: flex-end; padding-top: 13px; }
.all { width: 87px; margin-right: 11px; }
.next { width: 102px; margin-right: 22px; border: 2px solid #0078d7; }
.close { width: 87px; }
.marks { position: absolute; inset: 0; width: 536px; height: 314px; pointer-events: none; }

.baidu { position: absolute; right: 80px; bottom: 12px; opacity: .85; }
.bai { font: bold 64px "Liberation Sans", sans-serif; }
.du { font: bold 38px "Liberation Sans", sans-serif; }
.jy { font: 900 48px "Noto Sans CJK SC", sans-serif; }
.url { font: 28px "Noto Sans", sans-serif; fill: #fff; stroke: #dedede; stroke-width: 3px; paint-order: stroke; }
.badge { position: absolute; right: 0; bottom: 0; background: #bfbfbf; overflow: hidden; }
.n7 { font: 900 28px "Noto Sans CJK SC", sans-serif; fill: #2f6d43; }
.yxw { font: 900 28px "Noto Sans CJK SC", sans-serif; fill: #7aae35; }
.py { font: 8px "Liberation Serif", serif; fill: #222; }
.xia { font: 14px "Noto Sans", sans-serif; fill: #fff; }
.yx { font: 900 31px "Noto Sans CJK SC", sans-serif; fill: #fff; }
```
